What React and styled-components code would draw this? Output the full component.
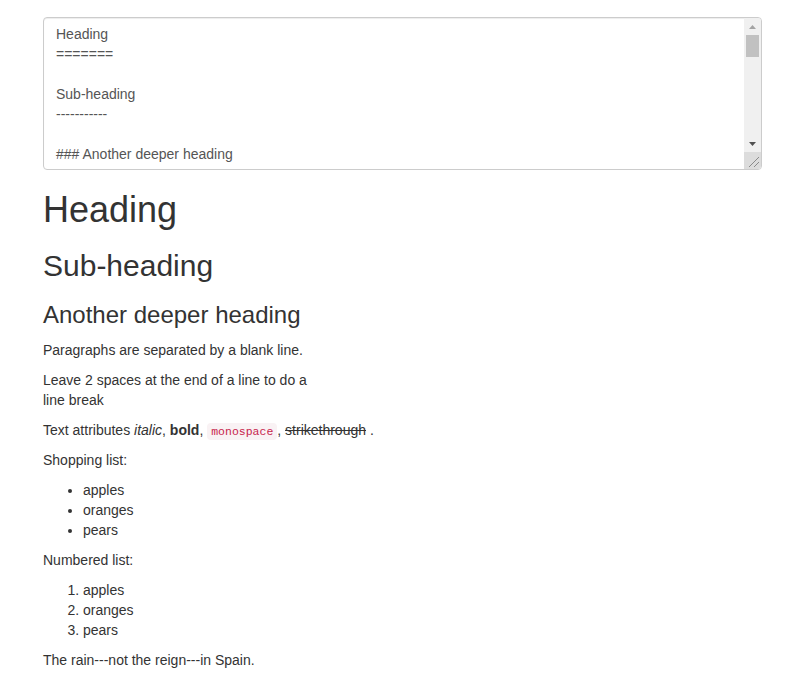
import React from 'react'
import styled, { createGlobalStyle } from 'styled-components'

const GlobalStyle = createGlobalStyle`
    html, body {
        margin: 0;
        padding: 0;
        background: #fff;
    }
    body {
        font-family: "Liberation Sans", Arial, sans-serif;
        font-size: 14px;
        line-height: 20px;
        color: #333;
    }
`

const source = `Heading
=======

Sub-heading
-----------
 
### Another deeper heading
 
Paragraphs are separated
by a blank line.

Leave 2 spaces at the end of a line to do a  
line break

Text attributes *italic*, **bold**, 
\`monospace\`, ~~strikethrough~~ .

Shopping list:

  * apples
  * oranges
  * pears

Numbered list:

  1. apples
  2. oranges
  3. pears

The rain---not the reign---in Spain.`

const Page = styled.div`
    width: 719px;
    margin: 17px 0 0 43px;
`

const EditorBox = styled.div`
    display: flex;
    height: 153px;
    box-sizing: border-box;
    border: 1px solid #ccc;
    border-radius: 4px;
    box-shadow: inset 0 1px 1px rgba(0, 0, 0, 0.075);
    overflow: hidden;
`

const Editor = styled.textarea`
    flex: 1;
    min-width: 0;
    margin: 0;
    padding: 6px 12px;
    font-family: "Liberation Sans", Arial, sans-serif;
    font-size: 14px;
    line-height: 20px;
    color: #555;
    background: transparent;
    border: none;
    resize: none;
    outline: none;
    overflow: hidden;
`

const ScrollBar = styled.div`
    width: 17px;
    flex: none;
    display: flex;
    flex-direction: column;
    background: #f0f0f0;
`

const ArrowButton = styled.div`
    height: 17px;
    flex: none;
    display: flex;
    align-items: center;
    justify-content: center;
`

const Track = styled.div`
    flex: 1;
    padding: 0 2px 0 2px;
`

const Thumb = styled.div`
    height: 22px;
    background: #c1c1c1;
`

const Resizer = styled.div`
    height: 17px;
    flex: none;
    background: #dcdcdc;
    display: flex;
    align-items: flex-end;
    justify-content: flex-end;
`

const Preview = styled.div``

const H1 = styled.h1`
    font-size: 36px;
    font-weight: 500;
    line-height: 1.1;
    margin: 20px 0 10px;
`

const H2 = styled.h2`
    font-size: 30px;
    font-weight: 500;
    line-height: 1.1;
    margin: 19px 0 10px;
`

const H3 = styled.h3`
    font-size: 24px;
    font-weight: 500;
    line-height: 1.1;
    margin: 20px 0 12px;
`

const P = styled.p`
    margin: 0 0 10px;
`

const Code = styled.code`
    padding: 2px 4px;
    font-family: "Liberation Mono", "Courier New", monospace;
    font-size: 11.5px;
    line-height: 1;
    color: #c7254e;
    background: #f9f2f4;
    border-radius: 4px;
`

const List = styled.ul`
    margin: 0 0 10px;
    padding-left: 40px;
`

const NumList = styled(List).attrs({ as: 'ol' })``

function Arrow({ down, color }) {
    return (
        <svg width="7" height="4" viewBox="0 0 7 4">
            <polygon points={down ? '0,0 7,0 3.5,4' : '3.5,0 7,4 0,4'} fill={color} />
        </svg>
    )
}

export default function App() {
    return (
        <>
            <GlobalStyle />
            <Page>
                <EditorBox>
                    <Editor defaultValue={source} spellCheck={false} />
                    <ScrollBar>
                        <ArrowButton><Arrow color="#a3a3a3" /></ArrowButton>
                        <Track><Thumb /></Track>
                        <ArrowButton><Arrow down color="#505050" /></ArrowButton>
                        <Resizer>
                            <svg width="17" height="17" viewBox="0 0 17 17">
                                <line x1="15" y1="5" x2="5" y2="15" stroke="#8a8a8a" strokeWidth="1" />
                                <line x1="15" y1="10" x2="10" y2="15" stroke="#8a8a8a" strokeWidth="1" />
                            </svg>
                        </Resizer>
                    </ScrollBar>
                </EditorBox>
                <Preview>
                    <H1>Heading</H1>
                    <H2>Sub-heading</H2>
                    <H3>Another deeper heading</H3>
                    <P>Paragraphs are separated by a blank line.</P>
                    <P>Leave 2 spaces at the end of a line to do a<br />line break</P>
                    <P>
                        Text attributes <em>italic</em>, <strong>bold</strong>, <Code>monospace</Code>, <del>strikethrough</del> .
                    </P>
                    <P>Shopping list:</P>
                    <List>
                        <li>apples</li>
                        <li>oranges</li>
                        <li>pears</li>
                    </List>
                    <P>Numbered list:</P>
                    <NumList>
                        <li>apples</li>
                        <li>oranges</li>
                        <li>pears</li>
                    </NumList>
                    <P>The rain---not the reign---in Spain.</P>
                </Preview>
            </Page>
        </>
    )
}
